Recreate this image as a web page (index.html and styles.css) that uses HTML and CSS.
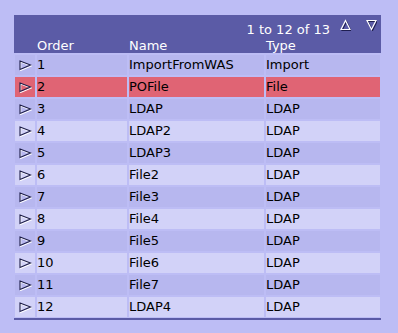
FILE: index.html
```html
<!DOCTYPE html>
<html lang="en">
<head>
  <meta charset="utf-8" />
  <title>Mapping order</title>
  <link rel="stylesheet" href="styles.css">
</head>
<body>
  <div class="list">
    <div class="list-head">
      <div class="pager">
        <span class="pager-text">1 to 12 of 13</span>
        <svg class="arrow up" width="11" height="12" viewBox="0 0 11 12">
          <polygon points="5.5,1.5 10,10.5 1,10.5" fill="none" stroke="#1e1e50" stroke-width="1.2" transform="translate(1,1)"/>
          <polygon points="5.5,1.5 10,10.5 1,10.5" fill="none" stroke="#fff" stroke-width="1.2"/>
        </svg>
        <svg class="arrow down" width="11" height="12" viewBox="0 0 11 12">
          <polygon points="1,1.5 10,1.5 5.5,10.5" fill="none" stroke="#1e1e50" stroke-width="1.2" transform="translate(1,1)"/>
          <polygon points="1,1.5 10,1.5 5.5,10.5" fill="none" stroke="#fff" stroke-width="1.2"/>
        </svg>
      </div>
      <div class="cols head-cols">
        <span></span>
        <span>Order</span>
        <span>Name</span>
        <span>Type</span>
      </div>
    </div>
    <div id="rows"></div>
    <div class="list-foot"></div>
  </div>

  <script>
    // order, name, type
    const entries = [
      [1, 'ImportFromWAS', 'Import'],
      [2, 'POFile', 'File'],
      [3, 'LDAP', 'LDAP'],
      [4, 'LDAP2', 'LDAP'],
      [5, 'LDAP3', 'LDAP'],
      [6, 'File2', 'LDAP'],
      [7, 'File3', 'LDAP'],
      [8, 'File4', 'LDAP'],
      [9, 'File5', 'LDAP'],
      [10, 'File6', 'LDAP'],
      [11, 'File7', 'LDAP'],
      [12, 'LDAP4', 'LDAP'],
    ];
    const selected = 2;

    const playIcon = '<svg width="13" height="11" viewBox="0 0 13 11">' +
      '<polygon points="1,1 11.5,5 1,9.5" fill="none" stroke="#fff" stroke-width="1.1" transform="translate(0.7,0.9)"/>' +
      '<polygon points="1,1 11.5,5 1,9.5" fill="none" stroke="#1c1c48" stroke-width="1.1"/>' +
      '</svg>';

    const rows = document.getElementById('rows');
    entries.forEach(([order, name, type], i) => {
      const row = document.createElement('div');
      row.className = 'cols row ' + (order === selected ? 'selected' : (i % 2 ? 'even' : 'odd'));
      row.innerHTML = `<span class="icon">${playIcon}</span><span>${order}</span><span>${name}</span><span>${type}</span>`;
      rows.appendChild(row);
    });
  </script>
</body>
</html>
```

FILE: styles.css
```css
body { margin: 0; background: #bdbdf5; font-family: "DejaVu Sans", Verdana, sans-serif; font-size: 13px; color: #000; }

.list { width: 367px; margin: 15px 0 0 14px; }

.list-head { background: #5b5ba6; color: #fff; padding-top: 4px; height: 34px; margin-bottom: 2px; }
.pager { display: flex; align-items: flex-start; justify-content: flex-end; height: 19px; padding-right: 4px; }
.pager-text { margin-top: 3px; line-height: 16px; margin-right: 10px; }
.arrow.up { margin-right: 15px; }

.cols { display: grid; grid-template-columns: 20px 90px 135px 114px; column-gap: 2px; padding: 0 1px; }
.head-cols { line-height: 15px; }

.row { margin-bottom: 2px; line-height: 20px; }
.row span { height: 20px; white-space: nowrap; overflow: hidden; }
.row.odd span { background: #b7b7ef; }
.row.even span { background: #d2d2f8; }
.row.selected span { background: #e06474; }
.row .icon { display: flex; align-items: center; justify-content: flex-start; padding-left: 4px; box-sizing: border-box; }
.row .icon svg { display: block; }

.list-foot { height: 2px; background: #5b5ba6; margin-top: -1px; }
```
